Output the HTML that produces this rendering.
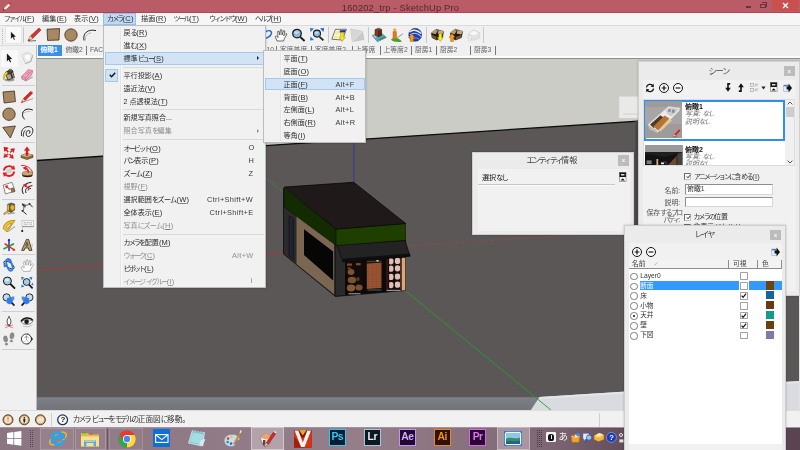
<!DOCTYPE html>
<html lang="ja">
<head>
<meta charset="utf-8">
<title>160202_trp - SketchUp Pro</title>
<style>
html,body{margin:0;padding:0;}
body{width:800px;height:450px;overflow:hidden;position:relative;background:#f0f0f0;will-change:transform;
  font-family:"Liberation Sans","Noto Sans CJK JP",sans-serif;font-size:7.1px;color:#222;line-height:1;}
.a{position:absolute;}
.t{position:absolute;white-space:nowrap;}
.k{letter-spacing:-0.27em;}
.w{letter-spacing:-0.1em;}
.e{font-size:1.06em;letter-spacing:0.2px;}
.h{letter-spacing:-0.2em;}
u{text-decoration:underline;text-underline-offset:0.5px;text-decoration-thickness:0.5px;text-decoration-color:rgba(40,40,40,.55);}
svg{position:absolute;overflow:visible;}
#title{left:0;top:0;width:800px;height:12.5px;background:#b95c67;}
#title .cap{left:341.8px;top:2.6px;font-size:9.4px;color:#55272e;letter-spacing:0.15px;}
#menubar{left:0;top:12.5px;width:800px;height:12px;background:#f6f6f7;}
#menubar .t{top:2.6px;font-size:7.1px;color:#333;letter-spacing:0.1px;}
#toolbar{left:0;top:24.5px;width:800px;height:34px;background:#f0f0f0;border-top:0.6px solid #dadada;}
.vsep{position:absolute;width:0.6px;background:#c8c8c8;top:1.6px;height:16px;}
.tab{position:absolute;top:21.2px;font-size:6.8px;color:#626262;white-space:nowrap;}
.tbar{position:absolute;top:20.2px;width:0.7px;height:9.5px;background:#777;}
#ltools{left:0;top:57.5px;width:36.5px;height:352px;background:#f0f0f0;}
#view{left:36.5px;top:58.5px;width:763.5px;height:351px;background:#5a5756;overflow:hidden;}
#status{left:0;top:409.5px;width:800px;height:17px;background:#f1f1f1;border-top:0.6px solid #dcdcdc;box-sizing:border-box;}
#task{left:0;top:426.5px;width:800px;height:23.5px;background:#7d616e;}
.menu{background:#f1f1f1;border:1px solid #bcbcbc;box-shadow:1.2px 1.2px 1.6px rgba(0,0,0,.22);box-sizing:border-box;}
.mi{position:absolute;left:0;height:13px;width:100%;}
.mi .l{position:absolute;top:2.9px;white-space:nowrap;font-size:7.1px;color:#2c2c2c;}
.mi .s{position:absolute;top:2.8px;white-space:nowrap;font-size:7.4px;color:#3a3a3a;letter-spacing:0.35px;}
.mi.g .l,.mi.g .s{color:#8e8e8e;}
.sep{position:absolute;height:0.6px;background:#dadada;}
.hl{position:absolute;background:#d1e3f5;border:1px solid #a4c9ef;box-sizing:border-box;}
.panel{position:absolute;background:#ebebeb;border:0.6px solid #cfcfcf;box-sizing:border-box;box-shadow:0 0 2px rgba(0,0,0,.25);}
.ptitle{position:absolute;white-space:nowrap;font-size:8.4px;color:#444;}
.xbtn{position:absolute;width:11px;height:10.5px;background:#bcbcbc;color:#fff;font-size:5.5px;text-align:center;line-height:10.5px;font-weight:bold;}
.ck{position:absolute;width:6.6px;height:6.6px;background:#fff;border:1px solid;border-color:#6e6e6e #c4c4c4 #c4c4c4 #6e6e6e;box-sizing:border-box;}
.rd{position:absolute;width:7.4px;height:7.4px;border-radius:50%;background:#fff;border:1px solid #7c7c7c;box-sizing:border-box;}
.sw{position:absolute;width:8.2px;height:8.2px;}
.lt{position:absolute;font-size:6.8px;color:#333;white-space:nowrap;}
.ad{top:2.8px;width:16.6px;height:16.4px;border:1.3px solid;box-sizing:border-box;font-size:10.4px;font-weight:bold;text-align:center;line-height:13.4px;letter-spacing:-0.5px;}
#task{background:linear-gradient(90deg,#8b7581 0,#947e89 45%,#7f6875 68%,#5e4856 80%,#5a4452 100%);}

</style>
</head>
<body>
<!-- TITLE -->
<div id="title" class="a">
  <div class="a" style="left:0;top:11.7px;width:800px;height:0.8px;background:#b44452"></div>
  <svg style="left:2px;top:1.5px" width="10" height="10" viewBox="0 0 10 10"><path d="M1 8.5 L2 5.5 L7 0.8 L9.2 3 L4 7.8 Z" fill="#f4ead8" stroke="#8a3a30" stroke-width="0.6"/><path d="M6.4 1.4 L8.6 3.6 L9.3 2.6 L7.3 0.6Z" fill="#d0342c"/><path d="M1 8.5 L1.6 6.6 L2.8 7.9Z" fill="#333"/></svg>
  <div class="t cap">160202_trp - SketchUp Pro</div>
  <div class="a" style="left:746px;top:6.3px;width:5.2px;height:1.5px;background:#6b343c"></div>
  <div class="a" style="left:760.4px;top:3.8px;width:5.2px;height:4.4px;border:1px solid #6b343c;box-sizing:border-box"></div>
  <div class="a" style="left:761.8px;top:2.4px;width:5.2px;height:4.4px;border:1px solid #6b343c;border-left:none;border-bottom:none;box-sizing:border-box"></div>
  <div class="a" style="left:772px;top:0;width:26.2px;height:10.6px;background:#ca4f4f"></div>
  <svg style="left:782px;top:2px" width="7" height="7" viewBox="0 0 7 7"><path d="M1 1 L6 6 M6 1 L1 6" stroke="#fff" stroke-width="1.3"/></svg>
</div>
<!-- MENUBAR -->
<div id="menubar" class="a">
  <div class="t" style="left:3.7px"><span class="k">ファイル</span><span class="e">(<u>F</u>)</span></div>
  <div class="t" style="left:42px">編集<span class="e">(<u>E</u>)</span></div>
  <div class="t" style="left:74px">表示<span class="e">(<u>V</u>)</span></div>
  <div class="a" style="left:103px;top:0.4px;width:33px;height:12px;background:#bfdaf5;border:1px solid #94c0ee;box-sizing:border-box;"></div>
  <div class="t" style="left:107px"><span class="k">カメラ</span><span class="e">(<u>C</u>)</span></div>
  <div class="t" style="left:141px">描画<span class="e">(<u>R</u>)</span></div>
  <div class="t" style="left:173.5px"><span class="k">ツール</span><span class="e">(<u>T</u>)</span></div>
  <div class="t" style="left:209px"><span class="k">ウィンドウ</span><span class="e">(<u>W</u>)</span></div>
  <div class="t" style="left:255px"><span class="k">ヘルプ</span><span class="e">(<u>H</u>)</span></div>
</div>
<!-- TOOLBAR -->
<div id="toolbar" class="a">
  <div class="a" style="left:2px;top:3px;width:1px;height:17px;background:repeating-linear-gradient(#b8b8b8 0 1px,transparent 1px 2px)"></div>
  <!-- select arrow -->
  <div class="a" style="left:5px;top:0.8px;width:16.6px;height:17.4px;background:#f9f9f9;border:1px solid #e6e6e6;box-sizing:border-box"></div>
  <svg style="left:9.6px;top:5px" width="6.6" height="10" viewBox="0 0 8 12"><path d="M1 0.5 L1 9.5 L3.2 7.6 L4.8 11 L6.2 10.4 L4.7 7.1 L7.3 6.9 Z" fill="#111" stroke="#fff" stroke-width="0.4"/></svg>
  <div class="vsep" style="left:22.5px"></div>
  <!-- pencil -->
  <svg style="left:27px;top:1.7px" width="15" height="15" viewBox="0 0 15 15"><path d="M1 14 L3.4 9 L12 1 L14 3 L5.6 11.6 Z" fill="#d8322c" stroke="#7a1612" stroke-width="0.5"/><path d="M1 14 L3.4 9 L5.6 11.6Z" fill="#e9cfa0"/><path d="M1 14 L2 12 L3 13.2Z" fill="#222"/><path d="M1.5 14.2 L9 13.6" stroke="#333" stroke-width="0.7"/></svg>
  <!-- rectangle -->
  <svg style="left:45.5px;top:2.7px" width="15" height="13" viewBox="0 0 15 13"><path d="M1 1.2 L13.6 0.6 L13 12 L1.6 12.4 Z" fill="#a88862" stroke="#3a2c1a" stroke-width="0.8"/></svg>
  <!-- circle -->
  <svg style="left:63.5px;top:2.2px" width="14" height="14" viewBox="0 0 14 14"><circle cx="7" cy="7" r="6.2" fill="#a88862" stroke="#3a2c1a" stroke-width="0.8"/></svg>
  <!-- arc -->
  <svg style="left:82px;top:2.2px" width="16" height="14" viewBox="0 0 16 14"><path d="M2 12.5 C0.5 5 6 0.8 14 2.6" fill="none" stroke="#222" stroke-width="1"/><path d="M3.5 12.5 C3 8 5.5 5.4 9 5" fill="none" stroke="#888" stroke-width="0.6"/></svg>
  <!-- orbit (mostly hidden) -->
  <svg style="left:262px;top:2.7px" width="12" height="13" viewBox="0 0 12 13"><ellipse cx="5" cy="6.5" rx="5" ry="3" fill="none" stroke="#2a66c8" stroke-width="1.6" transform="rotate(-35 5 6.5)"/></svg>
  <!-- pan hand -->
  <svg style="left:274px;top:2.2px" width="14" height="14" viewBox="0 0 14 14"><path d="M3 13 L1.2 8.6 L2.4 7.8 L4 9.6 L3.6 3.6 L5 3.4 L5.8 7 L6.4 1.8 L7.8 1.8 L8 7 L9.6 2.6 L10.8 3 L9.8 7.8 L12 5.4 L13 6.2 L10.4 10.6 L9.6 13 Z" fill="#fbfbfb" stroke="#333" stroke-width="0.7"/></svg>
  <!-- zoom -->
  <svg style="left:291px;top:2.2px" width="15" height="14" viewBox="0 0 15 14"><circle cx="6" cy="5.6" r="4.3" fill="#8fb9dc" stroke="#1c1c1c" stroke-width="1.3"/><path d="M9 8.8 L13.6 13" stroke="#222" stroke-width="2"/><ellipse cx="5.4" cy="4.6" rx="2.4" ry="1.4" fill="#c4dcf0"/></svg>
  <!-- zoom extents -->
  <svg style="left:309px;top:1.7px" width="16" height="15" viewBox="0 0 16 15"><circle cx="8" cy="6.6" r="3.5" fill="#8fb9dc" stroke="#1c1c1c" stroke-width="1.1"/><ellipse cx="7.6" cy="5.8" rx="1.9" ry="1.1" fill="#c4dcf0"/><path d="M10.6 9.8 L14.4 13.4" stroke="#222" stroke-width="1.8"/><g fill="#2f74d0"><path d="M1 1 L5 1.6 L1.6 5Z"/><path d="M15 1 L11 1.6 L14.4 5Z"/><path d="M1 13.6 L5 13 L1.6 9.6Z"/><path d="M12 1 L15 1 L15 4Z"/></g></svg>
  <div class="vsep" style="left:328px"></div>
  <!-- location / terrain / building / person icons (page coords) -->
  <svg style="left:0;top:-25.1px" width="800" height="60" viewBox="0 0 800 60">
    <g>
      <path d="M335.4 29.4 L346.4 29.2 L342.4 40 L331.8 39.2Z" fill="#fbf8e4" stroke="#3a3a3a" stroke-width="0.7"/>
      <path d="M336 31 L339.6 30.6 L338.6 34.4 L334.6 34.8Z" fill="#f6ec8c"/><path d="M334 36 L338 35.6 L337.4 38.4 L333.2 38.4Z" fill="#f6ec8c"/>
      <path d="M340 30.2 L345.6 30 L345 32.4 L339.4 32.6Z" fill="#1c3a9c"/>
      <path d="M340.6 32.6 L343.8 32.6 L343.8 37.2 L345.4 37.2 L342.2 41.4 L339 37.2 L340.6 37.2Z" fill="#f4e41c" stroke="#8a7c00" stroke-width="0.4"/>
    </g>
    <g>
      <path d="M350.6 28.8 L362.4 31.4 L364 39.6 L352.4 41.6Z" fill="#c9c9c9" stroke="#b4b4b4" stroke-width="0.5"/>
      <path d="M350.6 28.8 L362.4 31.4 L352.4 41.6Z" fill="#d6d6d6"/>
      <path d="M352.4 41.6 L362.4 31.4" stroke="#e6e6e6" stroke-width="0.8"/>
    </g>
    <g>
      <path d="M372.2 35.4 L380.6 32.4 L386.4 37.4 L377.4 41.8Z" fill="#4aa4e4" stroke="#2a4a6a" stroke-width="0.4"/>
      <path d="M373.6 35.6 L377 34.4 L379 36.4 L375.4 37.8Z" fill="#f2e27a"/>
      <path d="M378.4 39 L384.6 36.2 L386 37.4 L379.4 40.6Z" fill="#3a9a3c"/>
      <path d="M375 29.6 L378.6 28.2 L381.6 29.4 L381.6 35.4 L378 37 L375 35.4Z" fill="#7c3c26" stroke="#3a1a10" stroke-width="0.5"/>
      <path d="M378 31 L381.6 29.4 L381.6 35.4 L378 37Z" fill="#58281a"/>
    </g>
    <g>
      <path d="M391 39.4 C394 37 399 38 402 41.4 C398 42.4 393 42 391 39.4Z" fill="#3aa82c"/>
      <path d="M396.6 38.4 L403 33.6" stroke="#8e8e8e" stroke-width="0.9"/>
      <circle cx="394.7" cy="29.7" r="1.5" fill="#f0a030"/>
      <path d="M393 31.6 L396.4 31.6 L396.6 38.6 L394.8 39.8 L393 38.6Z" fill="#e87c14" stroke="#9a4c08" stroke-width="0.4"/>
    </g>
  </svg>
  <div class="vsep" style="left:367.5px"></div>
  <div class="vsep" style="left:425.5px"></div>
  <!-- globe / warehouse icons (page coords) -->
  <svg style="left:0;top:-25.1px" width="800" height="60" viewBox="0 0 800 60">
    <g>
      <circle cx="415.2" cy="34.8" r="6.5" fill="#1f3fa4" stroke="#16286a" stroke-width="0.5"/>
      <path d="M409.6 32 C412 29.4 417 29.4 421 33.6" stroke="#e8eefa" stroke-width="1.5" fill="none"/>
      <path d="M410 35 C413.4 32.2 417.4 33 421.4 36.6" stroke="#b8c8ee" stroke-width="1.1" fill="none"/>
      <path d="M413 38.6 C415.4 37.4 418 38 419.6 39.6" stroke="#8aa4e0" stroke-width="0.9" fill="none"/>
      <path d="M410.2 41.4 L410.2 37.6 L408.6 37.6 L411.8 33.8 L415 37.6 L413.4 37.6 L413.4 41.4Z" fill="#f79a1c" stroke="#9a5400" stroke-width="0.4"/>
    </g>
    <g>
      <path d="M431.4 33 L436.4 29.4 L443.6 31.4 L442.4 37.6 L436.6 40 L432 37.6Z" fill="#1e1812" stroke="#120e08" stroke-width="0.5"/>
      <path d="M431.4 33 L434.4 29.6 L438 30.6 L435.6 34.2Z" fill="#b49a6e"/><path d="M438.6 30.2 L443.8 31.2 L442.2 34.4 L437.6 33.4Z" fill="#c4aa7c"/>
      <path d="M432 35 L436.4 36.6 L436.6 40 L432 37.6Z" fill="#6a5434"/>
      <path d="M438.8 33.6 L441.8 33.6 L441.8 37.4 L443.4 37.4 L440.3 41.4 L437.2 37.4 L438.8 37.4Z" fill="#f8ec1c" stroke="#8a7c00" stroke-width="0.4"/>
    </g>
    <g>
      <path d="M450.4 33 L455.4 29.4 L462.6 31.4 L461.4 37.6 L455.6 40 L451 37.6Z" fill="#1e1812" stroke="#120e08" stroke-width="0.5"/>
      <path d="M450.4 33 L453.4 29.6 L457 30.6 L454.6 34.2Z" fill="#b49a6e"/><path d="M457.6 30.2 L462.8 31.2 L461.2 34.4 L456.6 33.4Z" fill="#c4aa7c"/>
      <path d="M456 36.8 L461.4 35 L461.4 37.6 L455.8 40Z" fill="#6a5434"/>
      <path d="M450.6 41.4 L450.6 37.4 L449 37.4 L452.1 33.4 L455.2 37.4 L453.6 37.4 L453.6 41.4Z" fill="#f79a1c" stroke="#9a5400" stroke-width="0.4"/>
    </g>
    <g>
      <path d="M468 34.4 L473.4 29.6 L480 33 L479.4 38 L473.6 40.4 L468.6 38.4Z" fill="#e2e2e2" stroke="#c6c6c6" stroke-width="0.5"/>
      <path d="M469.6 33.8 L473.6 30.8 L478.6 33.2 L474 35.4Z" fill="#f8f8f8"/>
      <path d="M468.6 41 L468.6 38 L467.4 38 L469.8 35 L472.2 38 L471 38 L471 41Z" fill="#f0f0f0" stroke="#c4c4c4" stroke-width="0.4"/>
    </g>
  </svg>
  <div class="vsep" style="left:482.5px"></div>
  <!-- scene tabs -->
  <div class="a" style="left:37.5px;top:19.5px;width:24.5px;height:10.6px;background:#3d8ee8"></div>
  <div class="tab" style="left:40.5px;color:#fff;font-weight:bold">俯瞰1</div>
  <div class="tab" style="left:65.5px">俯瞰2</div><div class="tbar" style="left:86px"></div>
  <div class="tab" style="left:90px">FAC</div>
  <div class="tab" style="left:266.5px">10</div><div class="tbar" style="left:276px"></div>
  <div class="tab" style="left:280px">客席普席</div><div class="tbar" style="left:311px"></div>
  <div class="tab" style="left:315px">客席普席2</div><div class="tbar" style="left:351.5px"></div>
  <div class="tab" style="left:355px">上等席</div><div class="tbar" style="left:379.5px"></div>
  <div class="tab" style="left:383.5px">上等席2</div><div class="tbar" style="left:410.5px"></div>
  <div class="tab" style="left:415px">厨房1</div><div class="tbar" style="left:436px"></div>
  <div class="tab" style="left:440px">厨房2</div><div class="tbar" style="left:470px"></div>
  <div class="tab" style="left:474px">厨房3</div><div class="tbar" style="left:495px"></div>
  <div class="a" style="left:36.5px;top:30.8px;width:764px;height:1.4px;background:#fbfbfb"></div>
  <div class="a" style="left:36.5px;top:32.2px;width:764px;height:1.2px;background:#8e8e8e"></div>
</div>

<div id="view" class="a">
<svg class="a" style="left:0;top:0" width="764" height="351" viewBox="36.5 58.5 764 351">
  <defs>
    <linearGradient id="band" x1="0" y1="0" x2="0" y2="1"><stop offset="0" stop-color="#7d8086"/><stop offset="1" stop-color="#717479"/></linearGradient>
    <pattern id="brick" width="4" height="2.4" patternUnits="userSpaceOnUse"><rect width="4" height="2.4" fill="#9a5432"/><rect width="4" height="0.4" fill="#7c4128"/><rect x="1" width="0.4" height="1.2" fill="#7c4128"/><rect x="3" y="1.2" width="0.4" height="1.2" fill="#7c4128"/><rect x="1.6" y="0.5" width="1.2" height="0.7" fill="#a86038"/></pattern>
  </defs>
  <!-- sky -->
  <polygon points="36,57 800,57 800,110.1 36.5,160" fill="#cbccc6"/>
  <line x1="36.5" y1="160" x2="800" y2="110.1" stroke="#0c0c0c" stroke-width="1.3"/>
  <!-- white block at horizon right -->
  <rect x="618.7" y="96" width="19" height="21.6" fill="#e9e9e7"/>
  <rect x="622.5" y="113.2" width="15.2" height="0.7" fill="#c9c9c7"/>
  <!-- dark strip right edge -->
  <rect x="634.6" y="120.4" width="3" height="110" fill="#494747"/>
  <!-- bottom band -->
  <rect x="36" y="396.7" width="764" height="13" fill="url(#band)"/>
  <polygon points="530,410 539,396.6 626,391 800,380.5 800,410" fill="#d9dbe1"/>
  <polygon points="539,396.6 626,391 800,380.5 800,382.5 626,393 539,398.4" fill="#e4e6ea"/>
  <!-- axes -->
  <line x1="36.5" y1="269.6" x2="283" y2="253" stroke="#b83434" stroke-width="0.8"/>
  <line x1="405.5" y1="245.7" x2="640" y2="230" stroke="#c04040" stroke-width="0.8" stroke-dasharray="0.9 1.3"/>
  <line x1="404.5" y1="290" x2="551" y2="410" stroke="#23a02a" stroke-width="0.9"/>
  <line x1="225" y1="145" x2="283.5" y2="192.5" stroke="#3cae48" stroke-width="0.8" stroke-dasharray="1 1.6"/>
  <line x1="353.4" y1="60" x2="353.4" y2="182" stroke="#2626c4" stroke-width="0.7"/>
  <!-- BUILDING -->
  <g stroke-linejoin="round">
  <!-- left wall base -->
  <polygon points="283,188 335,229 335,296 283,253.5" fill="#2b2b2b" stroke="#0c0c0c" stroke-width="0.8"/>
  <!-- tan frame on left wall -->
  <polygon points="296,212.5 333.5,241 333.5,293.7 296,263.4" fill="#7b6651"/>
  <polygon points="303.5,228.8 332.6,251 332.6,280 303.5,254.6" fill="#060606"/>
    <!-- door stripe on left pillar -->
  <polygon points="288.5,215 293,218.5 293,259 288.5,255.5" fill="#23232f" stroke="#0a0a0a" stroke-width="0.5"/>
  <!-- front facade -->
  <polygon points="335,244 405,239.5 405,290 335,296" fill="#0b0b0b" stroke="#0c0c0c" stroke-width="0.7"/>
  <!-- front left pillar -->
  <polygon points="335,244 344.5,243.4 344.5,294.6 335,295.5" fill="#2a2a2a"/>
  <!-- left window with brown shapes -->
  <polygon points="346,262 363,261 363,292 346,293.2" fill="#120c08"/>
  <ellipse cx="350.5" cy="271.5" rx="3.4" ry="3" fill="#7c5332"/>
  <ellipse cx="351.5" cy="279.5" rx="4.2" ry="3.2" fill="#7c5332"/>
  <ellipse cx="350.5" cy="287.5" rx="4.2" ry="3.4" fill="#835a38"/>
  <ellipse cx="358.5" cy="287" rx="3.6" ry="3" fill="#7a5030"/>
  <ellipse cx="357.5" cy="278.5" rx="1.6" ry="2" fill="#5c3a22"/>
  <rect x="346.5" y="263" width="5" height="2.2" fill="#8d4526"/>
  <rect x="355.5" y="262.6" width="4.6" height="2.2" fill="#8d4526"/>
  <rect x="347" y="267" width="3.4" height="1.6" fill="#7a3c22"/>
  <!-- door brick -->
  <polygon points="366.3,263 381,262.2 381,287.4 366.3,288.4" fill="url(#brick)"/>
  <rect x="366.3" y="260.2" width="14.7" height="1.6" fill="#5a3424"/>
  <rect x="376" y="259.4" width="2" height="1.6" fill="#d8d8d8"/>
  <rect x="367" y="288.8" width="14" height="1.4" fill="#3d464a"/>
  <!-- right window with pink circles -->
  <polygon points="386,258.5 400.5,257.6 400.5,288.6 386,289.6" fill="#1a0d0a"/>
  <g fill="#dcc0b9">
    <ellipse cx="390.4" cy="260.8" rx="2.9" ry="3.1"/><ellipse cx="397" cy="260.4" rx="2.9" ry="3.1"/>
    <ellipse cx="390.4" cy="268.2" rx="2.9" ry="3.1"/><ellipse cx="397" cy="267.8" rx="2.9" ry="3.1"/>
    <ellipse cx="390.4" cy="276.4" rx="2.9" ry="3.1"/><ellipse cx="397" cy="276.0" rx="2.9" ry="3.1"/>
    <ellipse cx="390.4" cy="284.6" rx="2.9" ry="3.1"/><ellipse cx="397" cy="284.2" rx="2.9" ry="3.1"/>
  </g>
  <rect x="386.2" y="258.4" width="1" height="30.6" fill="#6a2418"/><rect x="387.2" y="258.4" width="1.4" height="30.6" fill="#140a08"/>
  <rect x="399.6" y="258" width="0.9" height="30.6" fill="#6a2418"/>
  <rect x="393.2" y="258" width="1" height="31" fill="#140a08"/>
  <rect x="386" y="289.3" width="14" height="1.3" fill="#8f8f8f"/>
  <rect x="348" y="292.6" width="12" height="1.2" fill="#8a8a8a"/>
  <!-- tan pillar right -->
  <polygon points="401,257.3 405,257 405,290 401,290.3" fill="#d4a97c" stroke="#1a1208" stroke-width="0.4"/>
  <!-- awning -->
  <polygon points="336.5,244.6 404.5,240 409.6,255.8 342.3,261.3" fill="#232323" stroke="#080808" stroke-width="0.7"/>
  <polygon points="342.3,258.3 409.6,253 409.6,255.8 342.3,261.3" fill="#0e0e0e"/>
  <!-- green bands -->
  <polygon points="283.6,187.5 335.6,228.6 335.6,245 283.6,206.6" fill="#132b02" stroke="#0a1400" stroke-width="0.6"/>
  <polygon points="335.6,228.6 405,223 405,239.8 335.6,245" fill="#1f3f00" stroke="#0a1400" stroke-width="0.6"/>
  <!-- roof -->
  <polygon points="283.6,186.6 353.2,181.8 405.2,223 335.6,228.6" fill="#1f1a19" stroke="#070707" stroke-width="0.8"/>
  </g>
</svg>
</div>
<!-- LEFT TOOLS -->
<div class="a" style="left:0;top:45px;width:36px;height:365px;background:#f0f0f0;border-top:0.6px solid #dcdcdc"></div>
<div class="a" style="left:35.6px;top:45px;width:1.9px;height:364.5px;background:linear-gradient(90deg,#dadada,#9c9c9c)"></div>
<div class="a" style="left:1.2px;top:49.5px;width:17px;height:17px;background:#f9f9f9;box-sizing:border-box"></div>
<svg style="left:2.2px;top:50.5px" width="14" height="14" viewBox="0 0 14 14"><path d="M5 2.6 L5 10.2 L6.8 8.7 L8 11.5 L9.1 11 L7.9 8.3 L10.2 8.1 Z" fill="#1a1a1a"/><path d="M4.3 3.2 L4.3 10.8" stroke="#c4c4c4" stroke-width="0.7"/></svg>
<svg style="left:20.2px;top:50.5px" width="14" height="14" viewBox="0 0 14 14"><path d="M2 4 L8 1.4 L12.6 4.4 L11 10.4 L5.4 12.6 Z" fill="#f4f4f4" stroke="#c0c0c0" stroke-width="0.7"/><path d="M4.4 4.6 L8.2 3 L11 5 L9.8 8.8 L6 10.2 Z" fill="#fff" stroke="#d0d0d0" stroke-width="0.5"/><path d="M5.4 12.6 L11 10.4 L12.6 4.4" fill="none" stroke="#a8a8a8" stroke-width="0.9"/></svg>
<svg style="left:2.2px;top:68.0px" width="14" height="14" viewBox="0 0 14 14"><ellipse cx="7.4" cy="12" rx="5" ry="1.4" fill="#9a9a9a"/><path d="M3.4 5.4 L10.6 3.4 L12.4 9.6 L6 12 Z" fill="#b8a47a" stroke="#2a2a2a" stroke-width="0.8"/><ellipse cx="7" cy="4.4" rx="3.8" ry="1.6" transform="rotate(-15 7 4.4)" fill="#4a463a" stroke="#1a1a1a" stroke-width="0.6"/><path d="M6 3 C7 0.6 10.4 0.8 11 3.6" fill="none" stroke="#222" stroke-width="0.8"/><path d="M4.6 3.6 C2.6 4.6 1 7.4 1.4 10.4 C1.4 12 2.4 12 2.4 10.6 C2.6 8.4 4 6.4 6 5.4 Z" fill="#f2d21c" stroke="#8a7400" stroke-width="0.4"/><path d="M9 5.6 L10.4 10" stroke="#2a2a44" stroke-width="1.6"/></svg>
<svg style="left:20.2px;top:68.0px" width="14" height="14" viewBox="0 0 14 14"><path d="M4 12.4 L12 8.2 L13 9.4 L6 13.4 Z" fill="#b0b0b0"/><path d="M1.6 8.6 L8.4 1.6 L12.6 2.6 L12 6.4 L5.4 12.4 L1.8 11 Z" fill="#f4a0b8" stroke="#b45c78" stroke-width="0.6"/><path d="M1.6 8.6 L5.6 9.6 L5.4 12.4 M5.6 9.6 L12.6 2.6" fill="none" stroke="#c06a86" stroke-width="0.6"/><path d="M6 6 L9 3.4 L10 3.8 L7 6.6Z" fill="#d87c98"/></svg>
<svg style="left:2.2px;top:89.5px" width="14" height="14" viewBox="0 0 14 14"><path d="M1 2 L12.4 1 L13.4 11.6 L2.2 13 Z" fill="#a88862" stroke="#3a2c1a" stroke-width="0.8"/></svg>
<svg style="left:20.2px;top:89.5px" width="14" height="14" viewBox="0 0 14 14"><path d="M1.6 12.6 L13 8.6" stroke="#8a7a70" stroke-width="0.7"/><path d="M1.4 12.6 L3.2 8.8 L10.8 1.2 L12.8 3 L5 10.8 Z" fill="#ea1c1c" stroke="#8a1010" stroke-width="0.4"/><path d="M10.8 1.2 L12.8 3 L13.4 2.2 L11.6 0.4Z" fill="#f4a8b8"/><path d="M1.4 12.6 L3.2 8.8 L5 10.8Z" fill="#ead8a8"/><path d="M1.4 12.6 L2.2 10.9 L3 11.9Z" fill="#1a1a1a"/></svg>
<svg style="left:2.2px;top:107.0px" width="14" height="14" viewBox="0 0 14 14"><circle cx="7" cy="7.2" r="6.2" fill="#a88862" stroke="#3a2c1a" stroke-width="0.8"/></svg>
<svg style="left:20.2px;top:107.0px" width="14" height="14" viewBox="0 0 14 14"><path d="M4.6 12.4 C-0.6 7 4 -0.6 12.8 3" fill="none" stroke="#1a1a1a" stroke-width="1"/><path d="M2.6 8 C3 5.6 6 4.2 10.6 4.6" fill="none" stroke="#9a9a9a" stroke-width="0.6"/></svg>
<svg style="left:2.2px;top:124.5px" width="14" height="14" viewBox="0 0 14 14"><path d="M0.8 2.4 L13.4 1 L8.4 13 Z" fill="#a88862" stroke="#3a2c1a" stroke-width="0.8"/></svg>
<svg style="left:20.2px;top:124.5px" width="14" height="14" viewBox="0 0 14 14"><path d="M1.6 11 C0.6 6 3 2 8 1.6 C12 1.4 13.6 4 12.6 7.4 C11.6 11 8 12.6 6.6 10.6 C5.4 8.6 6.4 5.6 8.6 5.4 C10.6 5.4 10.4 8.4 8.8 8.6 M3.4 11.6 C3 8.6 4 6 5.6 5" fill="none" stroke="#1a1a1a" stroke-width="0.9"/></svg>
<svg style="left:2.2px;top:145.5px" width="14" height="14" viewBox="0 0 14 14"><g fill="#e81c1c" stroke="#8a0c0c" stroke-width="0.3"><path d="M7 7 L2 1.4 L5.8 2 L4.6 3.2 Z M2 1.4 L2.6 5.2 L3.8 4Z"/><path d="M2.2 1.2 L6.4 2 L2.8 5.4Z"/><path d="M12.6 2.4 L11.6 6.6 L8.4 3Z"/><path d="M1.6 11.4 L2.8 7.4 L5.8 10.8Z"/><path d="M11.4 12.6 L7.4 11.6 L10.8 8.6Z"/></g><path d="M3.6 3.2 L10 11 M11 4 L3.6 10" stroke="#e81c1c" stroke-width="1.3"/><circle cx="7" cy="7" r="1.2" fill="#f4f4f4"/></svg>
<svg style="left:20.2px;top:145.5px" width="14" height="14" viewBox="0 0 14 14"><path d="M1 9.4 L6.6 7.4 L13 9 L13 11.4 L7 13.6 L1 11.6 Z" fill="#8a6a3a" stroke="#3a2a10" stroke-width="0.5"/><path d="M1 9.4 L6.6 7.4 L13 9 L7 11 Z" fill="#d4b482"/><path d="M6 9.6 L6 4.6 L4.2 4.6 L7 0.8 L9.8 4.6 L8 4.6 L8 9.6 Z" fill="#e81c1c" stroke="#8a0c0c" stroke-width="0.3"/></svg>
<svg style="left:2.2px;top:163.5px" width="14" height="14" viewBox="0 0 14 14"><path d="M2 6.6 C2 2.6 7 0.8 10.6 3.4" fill="none" stroke="#e81c1c" stroke-width="1.9"/><path d="M8.6 5.6 L13.2 5.6 L12 1.2 Z" fill="#e81c1c"/><path d="M12 7.6 C12 11.6 7 13.4 3.4 10.8" fill="none" stroke="#e81c1c" stroke-width="1.9"/><path d="M5.4 8.6 L0.8 8.6 L2 13 Z" fill="#e81c1c"/><circle cx="7" cy="7" r="2.6" fill="#c8d4d8"/></svg>
<svg style="left:20.2px;top:163.5px" width="14" height="14" viewBox="0 0 14 14"><ellipse cx="7.4" cy="11" rx="5.2" ry="2.2" fill="#2a1c10"/><ellipse cx="7.4" cy="9.6" rx="5.2" ry="2.2" fill="#c8a878" stroke="#3a2a10" stroke-width="0.4"/><path d="M1 1.4 C6.6 1 12 4.6 12.6 9" fill="none" stroke="#c82020" stroke-width="0.9"/><path d="M8.4 8.8 C8.4 6.4 7 4.6 5 3.8" fill="none" stroke="#e81c1c" stroke-width="1.6"/><path d="M2.6 3.8 L6.8 2 L6 6.4 Z" fill="#e81c1c"/></svg>
<svg style="left:2.2px;top:181.0px" width="14" height="14" viewBox="0 0 14 14"><path d="M1.2 4 L10 1.4 L13 10 L3.4 13 Z" fill="#fff" stroke="#5a5a5a" stroke-width="0.7"/><path d="M8.6 7.6 L11.4 6.8 L13 10.6 L9.8 11.4Z" fill="#9a7648" stroke="#3a2a10" stroke-width="0.4"/><path d="M2.6 4.8 L6.4 4.2 L4.4 7.4Z" fill="#e81c1c"/><path d="M4.4 5.4 L8 8.6" stroke="#e81c1c" stroke-width="1.2"/></svg>
<svg style="left:20.2px;top:181.0px" width="14" height="14" viewBox="0 0 14 14"><path d="M3.4 13 C0.4 8 3 2 11.4 1.4" fill="none" stroke="#1a1a1a" stroke-width="1"/><path d="M6 12 C4.6 8.6 6.4 5.6 12.4 4.6" fill="none" stroke="#1a1a1a" stroke-width="1"/><path d="M8 9.6 C8 8.6 9 7.6 11 7.4" fill="none" stroke="#1a1a1a" stroke-width="0.9"/><path d="M3 3.4 L7.4 2.8 L5.4 6.4Z" fill="#e81c1c"/><path d="M5.4 4.4 L8.6 7.4" stroke="#e81c1c" stroke-width="1.2"/><path d="M6.6 6 L9.6 6 L8.4 8.6Z" fill="#e81c1c"/></svg>
<svg style="left:2.2px;top:201.5px" width="14" height="14" viewBox="0 0 14 14"><path d="M5 11 L12 10 L13.4 11.4 L6 12.6Z" fill="#a8a8a8"/><path d="M5.4 2.4 L9 1 L12.6 2 L12.6 8 L9 10.4 L5.4 8.6 Z" fill="#5a5e66" stroke="#2a2c30" stroke-width="0.5"/><ellipse cx="10.4" cy="5.6" rx="2.2" ry="2.8" fill="#f2b41c" stroke="#6a4c00" stroke-width="0.4"/><path d="M5.4 2.6 L7 3.2 L7 8.6 L5.4 8 Z" fill="#f2b41c"/><path d="M6 8.4 L1.6 11.4 L2.2 12.8 L7 9.6 Z" fill="#f2b41c" stroke="#6a4c00" stroke-width="0.4"/></svg>
<svg style="left:20.2px;top:201.5px" width="14" height="14" viewBox="0 0 14 14"><path d="M2.6 2.2 L5.6 5 M9.4 1.6 L12.6 5.2 M2 8.6 L6.6 12.4" stroke="#1a1a1a" stroke-width="0.9"/><path d="M3 3.6 L9.6 2.6 M3.4 9 L4 4.4" stroke="#1a1a1a" stroke-width="0.6"/><path d="M1.8 1.6 L4 2 L2.4 3.6Z M8.6 1 L10.8 1.4 L9.2 3Z M1.4 8 L3.6 8.4 L2 10Z" fill="#1a1a1a"/><circle cx="4.2" cy="3.6" r="1.3" fill="none" stroke="#1a1a1a" stroke-width="0.5"/></svg>
<svg style="left:2.2px;top:219.0px" width="14" height="14" viewBox="0 0 14 14"><path d="M1.2 9.6 C1.6 4.6 6 1 13 1.4 L5 13 Z" fill="#f2c21c" stroke="#8a6800" stroke-width="0.6"/><path d="M4.4 8.4 C5 6 7 4.4 9.6 4.4 L5.6 10 Z" fill="#d8d8d8" stroke="#8a6800" stroke-width="0.4"/><path d="M6 12.6 L13 7.4" stroke="#b0b0b0" stroke-width="1.2"/></svg>
<svg style="left:20.2px;top:219.0px" width="14" height="14" viewBox="0 0 14 14"><rect x="2" y="1.6" width="11.6" height="5.6" fill="#f8f8f8" stroke="#b4b4b4" stroke-width="0.6"/><path d="M3.6 3.4 L6 3.4 M7 3.4 L9.6 3.4 M10.4 3.4 L12 3.4 M3.6 5.2 L8 5.2 M9 5.2 L12 5.2" stroke="#9a9a9a" stroke-width="0.7"/><path d="M2 7.6 L13.6 7.6" stroke="#8a8a8a" stroke-width="0.9"/><path d="M2.6 7.6 L2.2 11.4" stroke="#c0c0c0" stroke-width="0.9"/><circle cx="2.2" cy="12" r="1.1" fill="#111"/></svg>
<svg style="left:2.2px;top:237.5px" width="14" height="14" viewBox="0 0 14 14"><path d="M7 1 L7 13" stroke="#1c2cd8" stroke-width="1.5"/><path d="M5.6 3 L7 0.4 L8.4 3Z" fill="#1c2cd8"/><path d="M1.4 11 L11.6 6" stroke="#1ca82c" stroke-width="1.4"/><path d="M2.6 5.6 L12.4 12" stroke="#e01c1c" stroke-width="1.4"/><path d="M10.4 12.4 L13.4 12.8 L12 10.2Z" fill="#e01c1c"/><path d="M9.6 5.4 L12.6 5.4 L11 7.6Z" fill="#1ca82c"/></svg>
<svg style="left:20.2px;top:237.5px" width="14" height="14" viewBox="0 0 14 14"><path d="M1.6 12.4 L6.4 1.4 L8.6 1.4 L12 12.4 L9 12.4 L8.4 10 L5 10 L4.2 12.4 Z M5.8 7.8 L7.8 7.8 L7 4.4 Z" fill="#b89c6c" stroke="#2a1c0c" stroke-width="0.7" fill-rule="evenodd"/><path d="M11 6.4 L13 5.6 L12.6 9.4Z" fill="#c8c8c8"/></svg>
<svg style="left:2.2px;top:258.0px" width="14" height="14" viewBox="0 0 14 14"><ellipse cx="7" cy="7" rx="6" ry="2.6" transform="rotate(35 7 7)" fill="none" stroke="#222" stroke-width="0.9"/><ellipse cx="7.4" cy="7" rx="2.6" ry="6" transform="rotate(-18 7 7)" fill="none" stroke="#2c7cf0" stroke-width="1.9"/><path d="M5 2.4 L9.4 1 L8.4 4.6Z" fill="#2c7cf0"/><path d="M1.4 6 L5.6 8 L2 9.4Z" fill="#2c7cf0"/></svg>
<svg style="left:20.2px;top:258.0px" width="14" height="14" viewBox="0 0 14 14"><path d="M3.4 13.4 L1 9.6 L2.2 8.6 L4.2 10 L3.6 4 L5 3.6 L6 7.4 L6.2 2 L7.8 1.8 L8.2 7.2 L9.6 2.6 L11 3 L10.2 8 L12.4 5.6 L13.4 6.6 L10.8 11 L10 13.4 Z" fill="#fdfdfd" stroke="#8a8a8a" stroke-width="0.6"/></svg>
<svg style="left:2.2px;top:275.5px" width="14" height="14" viewBox="0 0 14 14"><circle cx="5.4" cy="5" r="4" fill="#a8cce4" stroke="#1a1a1a" stroke-width="1"/><path d="M8.4 8 L13 12.6" stroke="#1a1a1a" stroke-width="1.9"/><ellipse cx="5" cy="4" rx="2.2" ry="1.2" fill="#dceef8"/></svg>
<svg style="left:20.2px;top:275.5px" width="14" height="14" viewBox="0 0 14 14"><circle cx="6.6" cy="6" r="3.4" fill="#a8cce4" stroke="#1a1a1a" stroke-width="0.9"/><path d="M9 8.6 L12.6 12.4" stroke="#1a1a1a" stroke-width="1.7"/><g fill="#2c7cf0"><path d="M1 0.8 L4.4 1.6 L1.8 4.2Z"/><path d="M12.4 0.8 L9 1.6 L11.6 4.2Z"/><path d="M1 11.6 L4.4 10.8 L1.8 8.2Z"/><path d="M12.8 6.4 L11 8.8 L13.4 9.6Z"/></g></svg>
<svg style="left:2.2px;top:293.0px" width="14" height="14" viewBox="0 0 14 14"><circle cx="4.6" cy="4.4" r="3.6" fill="#c4dcec" stroke="#1a1a1a" stroke-width="0.9"/><path d="M7.6 7.4 L12.4 12.6" stroke="#1a1a1a" stroke-width="1.7"/><path d="M5 5 L12.4 3.4 L11 8 L8 11.6 L4.6 10 Z" fill="#2c7cf0"/><circle cx="10.8" cy="5.2" r="1.6" fill="#5a8cd8"/></svg>
<svg style="left:20.2px;top:293.0px" width="14" height="14" viewBox="0 0 14 14"><circle cx="9.4" cy="4.4" r="3.6" fill="#c4dcec" stroke="#1a1a1a" stroke-width="0.9"/><path d="M6.4 7.4 L1.6 12.6" stroke="#1a1a1a" stroke-width="1.7"/><path d="M9 5 L1.6 3.4 L3 8 L6 11.6 L9.4 10 Z" fill="#2c7cf0"/><circle cx="3.2" cy="5.2" r="1.6" fill="#5a8cd8"/></svg>
<svg style="left:2.2px;top:314.5px" width="14" height="14" viewBox="0 0 14 14"><path d="M7 1 L7 2.6" stroke="#1a1a1a" stroke-width="1"/><path d="M7 2.4 C4.6 4.4 4.6 8 6.4 10 L7.6 10 C9.4 8 9.4 4.4 7 2.4 Z" fill="#fff" stroke="#1a1a1a" stroke-width="0.8"/><path d="M3 9.8 L11 12.8 M11 9.8 L3 12.8" stroke="#e86a6a" stroke-width="0.8"/><path d="M5.6 9.6 L8.4 11" stroke="#1a1a1a" stroke-width="0.7"/></svg>
<svg style="left:20.2px;top:314.5px" width="14" height="14" viewBox="0 0 14 14"><path d="M1 6.6 C3 2.6 10 1.6 13 5.4" fill="none" stroke="#111" stroke-width="1.5"/><path d="M1.4 7 C4 10.4 10 10.4 13 6.4 C10 4 4 4 1.4 7 Z" fill="#f4f4f4" stroke="#333" stroke-width="0.6"/><circle cx="6.6" cy="6.8" r="2.3" fill="#1a1a1a"/><path d="M3 10.6 C6 12.4 10 12 12.4 9.6" fill="none" stroke="#bcbcbc" stroke-width="1"/></svg>
<svg style="left:2.2px;top:332.0px" width="14" height="14" viewBox="0 0 14 14"><g fill="#8c8c8c" stroke="#6a6a6a" stroke-width="0.3"><ellipse cx="3.6" cy="7" rx="2.1" ry="3.2" transform="rotate(-8 3.6 7)"/><ellipse cx="4.4" cy="12.2" rx="1.4" ry="1.1"/><ellipse cx="10" cy="3.8" rx="2.1" ry="3.2" transform="rotate(8 10 3.8)"/><ellipse cx="9.4" cy="9" rx="1.4" ry="1.1"/></g></svg>
<svg style="left:20.2px;top:332.0px" width="14" height="14" viewBox="0 0 14 14"><path d="M7.6 1 L13 7 L7.6 13 Z" fill="#111"/><circle cx="6.4" cy="7" r="5" fill="#fdfdfd" stroke="#1a1a1a" stroke-width="0.8"/><path d="M6.4 3.4 L6.4 8 M4.4 6 L6.4 4 L8.4 6 M4.6 9.6 L5.4 8.6 M7.4 8.6 L8.2 9.6" stroke="#7a7a7a" stroke-width="0.7" fill="none"/></svg>
<div class="a" style="left:1.5px;top:85.0px;width:33px;height:0.7px;background:#cfcfcf"></div>
<div class="a" style="left:1.5px;top:142.0px;width:33px;height:0.7px;background:#cfcfcf"></div>
<div class="a" style="left:1.5px;top:198.5px;width:33px;height:0.7px;background:#cfcfcf"></div>
<div class="a" style="left:1.5px;top:254.3px;width:33px;height:0.7px;background:#cfcfcf"></div>
<div class="a" style="left:1.5px;top:310.5px;width:33px;height:0.7px;background:#cfcfcf"></div>
<div class="a" style="left:1.5px;top:348.5px;width:33px;height:0.7px;background:#cfcfcf"></div>

<!-- STATUS -->
<div id="status" class="a">
  <svg style="left:1.6px;top:3.6px" width="48" height="12" viewBox="0 0 48 12">
    <g stroke="#4a3420" stroke-width="0.9">
      <circle cx="6" cy="5.8" r="5" fill="#caa060"/><circle cx="22.3" cy="5.8" r="5" fill="#caa060"/><circle cx="38.4" cy="5.8" r="5" fill="#caa060"/>
    </g>
    <circle cx="6" cy="5.8" r="3.5" fill="#f6e6d0"/><circle cx="22.3" cy="5.8" r="3.5" fill="#f6e6d0"/><circle cx="38.4" cy="5.8" r="3.5" fill="#f6e6d0"/>
    <path d="M6 3.4 L6 8" stroke="#e88a8a" stroke-width="1"/><circle cx="6" cy="4.4" r="1.1" fill="#e89a9a"/>
    <circle cx="22.3" cy="3.8" r="0.9" fill="#222"/><path d="M21.2 5 L23.4 5 L23 8.6 L21.6 8.6 Z" fill="#222"/>
    <path d="M40 4.6 A2.2 2.2 0 1 0 40 7" fill="none" stroke="#d8d0c4" stroke-width="0.9"/>
  </svg>
  <div class="a" style="left:50.8px;top:2.5px;width:0.6px;height:13px;background:#cfcfcf"></div>
  <svg style="left:57px;top:3.6px" width="12" height="12" viewBox="0 0 12 12"><circle cx="5.6" cy="5.8" r="4.9" fill="#fff" stroke="#1c2f62" stroke-width="1.3"/></svg>
  <div class="t" style="left:60.6px;top:5px;font-size:8px;font-weight:bold;color:#111">?</div>
  <div class="t" style="left:72.8px;top:5px;font-size:7.7px;color:#333"><span class="k">カメラ</span> <span class="k">ビュー</span><span class="h">を</span><span class="k">モデル</span><span class="h">の</span>正面図<span class="h">に</span>移動。</div>
  <div class="a" style="left:598.5px;top:2px;width:0.6px;height:14px;background:#cfcfcf"></div>
</div>

<!-- TASKBAR -->
<div id="task" class="a">
  <div class="a" style="left:0;top:0;width:800px;height:0.8px;background:#a3929b"></div>
  <!-- start -->
  <svg style="left:7px;top:4.6px" width="15" height="15" viewBox="0 0 15 15"><g fill="#fff"><path d="M0 2 L6.4 1.1 L6.4 7 L0 7Z"/><path d="M7.2 1 L14.4 0 L14.4 7 L7.2 7Z"/><path d="M0 7.8 L6.4 7.8 L6.4 13.7 L0 12.8Z"/><path d="M7.2 7.8 L14.4 7.8 L14.4 14.8 L7.2 13.8Z"/></g></svg>
  <div class="a" style="left:30px;top:3.5px;width:4px;height:17px;background:radial-gradient(circle at 0.5px 0.5px,#5c4552 0.45px,transparent 0.6px) 0 0/2px 2px"></div>
  <!-- IE -->
  <div class="a" style="left:40px;top:1px;width:33.5px;height:22.5px;background:#96808b;border:0.6px solid #a896a0;box-sizing:border-box"></div>
  <svg style="left:47.5px;top:2.5px" width="20" height="19" viewBox="0 0 20 19"><ellipse cx="10" cy="9.5" rx="9.4" ry="4.4" transform="rotate(-32 10 9.5)" fill="none" stroke="#f2b824" stroke-width="1.5"/><path d="M15.4 11.2 A5.8 5.8 0 1 1 15.6 8.6 L6 8.6" fill="none" stroke="#2aa4ea" stroke-width="3"/></svg>
  <!-- Explorer -->
  <div class="a" style="left:75px;top:1px;width:31px;height:22.5px;background:#96808b;border:0.6px solid #a896a0;box-sizing:border-box"></div>
  <svg style="left:80px;top:4px" width="20" height="17" viewBox="0 0 20 17"><path d="M1 2 L7.6 2 L9 3.6 L19 3.6 L19 15 L1 15Z" fill="#e8b840"/><path d="M2 1 L6.6 1 L6.6 2.4 L2 2.4Z" fill="#3cae48"/><path d="M10 2.2 L12 2.2 L12 3.4 L10 3.4Z" fill="#d84c3c"/><path d="M1 5.4 L19 5.4 L19 15.6 L1 15.6Z" fill="#f8e08c"/><path d="M4 9.6 L16 9.6 L16 15.6 L13.6 15.6 L13.6 12 L6.4 12 L6.4 15.6 L4 15.6Z" fill="#5aa8e0"/><path d="M5 10.4 L15 10.4" stroke="#c8e4f8" stroke-width="0.8"/></svg>
  <div class="a" style="left:107.3px;top:2px;width:0.6px;height:20px;background:#65505b"></div>
  <!-- Chrome -->
  <div class="a" style="left:109px;top:1px;width:34px;height:22.5px;background:#927c87;border:0.6px solid #a08e98;box-sizing:border-box"></div>
  <svg style="left:117.5px;top:3.4px" width="18" height="18" viewBox="0 0 18 18"><circle cx="9" cy="9" r="8.6" fill="#e33b2e"/><path d="M9 9 L1.55 4.7 A8.6 8.6 0 0 0 9 17.6 L12.6 11.1 Z" fill="#2da94f"/><path d="M9 9 L9 17.6 A8.6 8.6 0 0 0 16.45 4.7 L9 4.7 Z" fill="#fdd93c"/><path d="M9 4.9 L16.5 4.9 A8.6 8.6 0 0 0 1.55 4.7 L5.4 11.1Z" fill="#e33b2e"/><circle cx="9" cy="9" r="4" fill="#fff"/><circle cx="9" cy="9" r="3.2" fill="#4688f1"/></svg>
  <!-- Mail -->
  <div class="a" style="left:153px;top:2.8px;width:17.4px;height:17.4px;background:#0f6fd6"></div>
  <svg style="left:155px;top:7px" width="14" height="9" viewBox="0 0 14 9"><rect x="0.6" y="0.6" width="12.4" height="7.8" fill="none" stroke="#fff" stroke-width="1.1"/><path d="M0.8 0.8 L6.8 5.6 L12.8 0.8" fill="none" stroke="#fff" stroke-width="1.1"/></svg>
  <!-- Notepad -->
  <svg style="left:187px;top:2.6px" width="20" height="19" viewBox="0 0 20 19"><path d="M5.4 1.6 L17.4 3.6 L15.6 17 L1.6 14Z" fill="#7cc4d0" stroke="#e8f4f6" stroke-width="0.8"/><path d="M6 3.6 L16.4 5.2 L15 15.4 L3 12.8Z" fill="#a4dce4"/><path d="M12 15.4 L15.6 17 L18.4 10 L14 11Z" fill="#d8e8ec"/><path d="M6 1.6 L17 3.4" stroke="#5c7c8c" stroke-width="1.1" stroke-dasharray="0.8 0.8"/></svg>
  <!-- Paint -->
  <svg style="left:222.5px;top:2px" width="20" height="20" viewBox="0 0 20 20"><path d="M9 5.4 C3 5.4 0.8 9.4 1.4 12.8 C2.2 17 8 18.6 11.6 16.4 C13.2 15.2 11 13.4 12.6 12 C14.6 10.6 16.6 12 16.6 9.4 C16.4 7 13 5.4 9 5.4Z" fill="#c8dcf0" stroke="#7a94b4" stroke-width="0.6"/><circle cx="5" cy="9.6" r="1.3" fill="#e03c2c"/><circle cx="8.4" cy="8" r="1.3" fill="#f2c41c"/><circle cx="4.6" cy="13" r="1.3" fill="#2c9c3c"/><circle cx="8" cy="14.6" r="1.3" fill="#3c5cd8"/><path d="M10.6 14.6 L16.6 3.6 L17.8 4.2 L12 15.4Z" fill="#e89a3c" stroke="#8a4c10" stroke-width="0.4"/><path d="M16.4 4 L17.4 1 L18.8 1.8 L17.8 4.6Z" fill="#f4e4c4"/></svg>
  <!-- SketchUp (active) -->
  <div class="a" style="left:251px;top:0.6px;width:32.5px;height:23px;background:#b4a2ab;border:0.6px solid #d2c6cc;box-sizing:border-box"></div>
  <svg style="left:257.5px;top:2.4px" width="20" height="20" viewBox="0 0 20 20"><path d="M2 9 L8 4 L13.4 7.6 L12 14.6 L5.4 16.6 Z" fill="#f6f2ea" stroke="#5a5a5a" stroke-width="0.6"/><path d="M8 4 L13.4 7.6 L9 10.4 L2 9Z" fill="#f0a46c"/><path d="M5 11 L7.4 11 L7.4 15.6 L5 16.2Z" fill="#4a4a4a"/><path d="M6.6 17.6 L8 14 L15.6 3 L17.8 4.6 L10 15.6 Z" fill="#d8282c" stroke="#6a1010" stroke-width="0.5"/><path d="M6.6 17.6 L8 14 L10 15.6Z" fill="#e8d4a4"/><path d="M15.6 3 L17.8 4.6 L18.6 3.4 L16.4 1.8Z" fill="#e8e8e8"/></svg>
  <!-- V -->
  <svg style="left:293.5px;top:3px" width="18" height="18" viewBox="0 0 18 18"><rect x="0" y="0" width="17.6" height="17.6" fill="#7a140c"/><path d="M0 0 L8.8 8 L17.6 0 L17.6 17.6 L0 17.6Z" fill="#d83414"/><path d="M0 6 L8.8 17.6 L0 17.6Z" fill="#a81c0c"/><path d="M5 0 L12.6 0 L8.8 5.6Z" fill="#f2a41c"/><path d="M0.6 0.6 L4.4 0.6 L8.8 12.6 L13.2 0.6 L17 0.6 L10.6 17 L7 17 Z" fill="#f4f4f4"/></svg>
  <!-- Adobe -->
  <div class="a ad" style="left:329px;border-color:#2ec6f2;background:#0a1c30;color:#32c8f4">Ps</div>
  <div class="a ad" style="left:364px;border-color:#a9c6d8;background:#0c1822;color:#e4eef4">Lr</div>
  <div class="a ad" style="left:399px;border-color:#cb8ef4;background:#1c0a32;color:#d8a8f8">Ae</div>
  <div class="a ad" style="left:434px;border-color:#f4821c;background:#2a1204;color:#f68c1e">Ai</div>
  <div class="a ad" style="left:469.4px;border-color:#e25cf2;background:#240a30;color:#e46cf4">Pr</div>
  <!-- Photo viewer (active) -->
  <div class="a" style="left:497px;top:0.6px;width:32.5px;height:23px;background:#a8959f;border:0.6px solid #c4b6bd;box-sizing:border-box"></div>
  <svg style="left:503.5px;top:4px" width="18" height="15" viewBox="0 0 18 15"><rect x="0.5" y="0.5" width="17" height="14" fill="#f4f4f4" stroke="#4a8cd8" stroke-width="1"/><rect x="2" y="2" width="14" height="11" fill="#8cc8e8"/><path d="M2 8 C6 5 10 9 16 6.4 L16 13 L2 13Z" fill="#3c8c6c"/><path d="M2 10.6 C7 8.6 11 11.6 16 9.6 L16 13 L2 13Z" fill="#2a5c8c"/><path d="M0 0 L3 0 L0 3Z M18 0 L15 0 L18 3Z M0 15 L3 15 L0 12Z M18 15 L15 15 L18 12Z" fill="#2c7ce0"/></svg>
  <div class="a" style="left:536.5px;top:3.5px;width:5px;height:17px;background:radial-gradient(circle at 0.5px 0.5px,#4c3846 0.45px,transparent 0.6px) 0 0/2px 2px"></div>
  <!-- tray -->
  <div class="a" style="left:546px;top:5.6px;width:9.6px;height:10px;background:#f4f4f4;border-radius:1.2px"></div>
  <div class="a" style="left:548px;top:7px;width:5.6px;height:7px;background:#111;border-radius:2.6px"></div>
  <div class="a" style="left:551.4px;top:8.4px;width:1px;height:4px;background:#eee"></div>
  <div class="t" style="left:558.6px;top:5.6px;font-size:9.6px;color:#f2f2f2">あ</div>
  <svg style="left:570px;top:5px" width="11" height="11" viewBox="0 0 11 11"><path d="M1 4 L10 4 L9 10.4 L2 10.4Z" fill="#f0a42c" stroke="#a05c0c" stroke-width="0.5"/><path d="M1 4 L5.4 6 L10 4 L5.4 2.4Z" fill="#f8e4b4"/><circle cx="8" cy="2.6" r="1.8" fill="#3c8ce8"/><path d="M2 2 L4.6 4.4" stroke="#e03c3c" stroke-width="1.4"/></svg>
  <svg style="left:582px;top:5px" width="11" height="11" viewBox="0 0 11 11"><path d="M1 1.6 L7 1.6 L7 7 L3.6 7 L2 9 L2 7 L1 7Z" fill="#e8eef8" stroke="#6a7ca8" stroke-width="0.5"/><circle cx="7" cy="5.6" r="2.6" fill="#9cc8f4" stroke="#2c5cb8" stroke-width="0.8"/><path d="M5 7.6 L2.6 10.4" stroke="#2c5cb8" stroke-width="1.3"/></svg>
  <svg style="left:593px;top:5.4px" width="12" height="10" viewBox="0 0 12 10"><path d="M1 4 L6 1 L11 3 L11 7.4 L5.4 9.6 L1 7.6Z" fill="#f2b83c" stroke="#a86c0c" stroke-width="0.5"/><path d="M1 4 L5.6 5.6 L11 3 L6 1Z" fill="#f8dc8c"/><path d="M4 3.4 L8.6 2" stroke="#fff" stroke-width="0.9"/></svg>
  <svg style="left:606px;top:5.2px" width="11" height="11" viewBox="0 0 11 11"><circle cx="5.4" cy="5.4" r="5" fill="#1c3cb4" stroke="#a8b8e8" stroke-width="0.6"/><text x="3.2" y="8.2" font-family="Liberation Sans, sans-serif" font-size="7.6" font-weight="bold" fill="#fff">?</text></svg>
  <svg style="left:618px;top:6px" width="7" height="11" viewBox="0 0 7 11"><circle cx="3" cy="2" r="1.5" fill="none" stroke="#f4f4f4" stroke-width="0.9"/><rect x="1.4" y="6.4" width="4" height="3" fill="#e4e4e4"/></svg>
</div>

<!-- SCENE PANEL -->
<div class="panel" style="left:638.4px;top:61.4px;width:162px;height:234.6px;"></div>
<div class="a" style="left:798.8px;top:296px;width:1.2px;height:114px;background:#e2e2e2"></div>
<div class="ptitle" style="left:708.6px;top:66.8px;letter-spacing:-1.5px">シーン</div>
<div class="xbtn" style="left:783.8px;top:65.6px">x</div>
<div class="a" style="left:642.5px;top:79.6px;width:153px;height:211.6px;background:#f1f1f1"></div>
<svg style="left:645px;top:82.5px" width="10" height="10" viewBox="0 0 10 10"><path d="M1.4 4.4 A3.6 3.6 0 0 1 8 3" fill="none" stroke="#111" stroke-width="1.3"/><path d="M8.6 0.8 L8.8 4.2 L5.6 3.4Z" fill="#111"/><path d="M8.6 5.6 A3.6 3.6 0 0 1 2 7" fill="none" stroke="#111" stroke-width="1.3"/><path d="M1.4 9.2 L1.2 5.8 L4.4 6.6Z" fill="#111"/></svg>
<svg style="left:659.0px;top:82.6px" width="10" height="10" viewBox="0 0 10 10"><circle cx="5" cy="5" r="4.5" fill="#fdfdfd" stroke="#111" stroke-width="1"/><path d="M2.6 5 L7.4 5 M5 2.6 L5 7.4" stroke="#111" stroke-width="1.15"/></svg>
<svg style="left:673.0px;top:82.6px" width="10" height="10" viewBox="0 0 10 10"><circle cx="5" cy="5" r="4.5" fill="#fdfdfd" stroke="#111" stroke-width="1"/><path d="M2.6 5 L7.4 5" stroke="#111" stroke-width="1.15"/></svg>
<svg style="left:724.5px;top:83px" width="6" height="9" viewBox="0 0 6 9"><path d="M5.2 0.9 L3 0.9 L3 6" fill="none" stroke="#111" stroke-width="1.6"/><path d="M0.2 4.8 L5.8 4.8 L3 8.8Z" fill="#111"/></svg>
<svg style="left:738px;top:83px" width="6" height="9" viewBox="0 0 6 9"><path d="M0.8 8.1 L3 8.1 L3 3" fill="none" stroke="#111" stroke-width="1.6"/><path d="M0.2 4.2 L5.8 4.2 L3 0.2Z" fill="#111"/></svg>
<svg style="left:750px;top:82.6px" width="9" height="10" viewBox="0 0 9 10"><g fill="none" stroke="#9a9a9a" stroke-width="0.6"><rect x="0.5" y="0.6" width="3" height="3"/><rect x="0.5" y="5.4" width="3" height="3"/></g><path d="M4.6 1.2 L8.4 1.2 M4.6 2.8 L7.4 2.8 M4.6 6 L8.4 6 M4.6 7.6 L7.4 7.6" stroke="#a4a4a4" stroke-width="0.7"/></svg>
<svg style="left:760.6px;top:86px" width="5" height="4" viewBox="0 0 5 4"><path d="M0.4 0.6 L4.6 0.6 L2.5 3.4Z" fill="#222"/></svg>
<svg style="left:769.6px;top:82px" width="7.4" height="9.8" viewBox="0 0 9 12"><rect x="0.4" y="0.4" width="8.2" height="11.2" fill="#fff" stroke="#555" stroke-width="0.6"/><rect x="0.6" y="0.6" width="7.8" height="5.6" fill="#111"/><rect x="2.4" y="2.6" width="4.2" height="1.6" fill="#fff"/><path d="M1.8 10.4 L4.5 7.6 L7.2 10.4Z" fill="#111"/></svg>
<svg style="left:782.9px;top:82.6px" width="9" height="10" viewBox="0 0 9 10"><rect x="0.8" y="2" width="4.8" height="6.6" fill="#e6f0fa" stroke="#7a9cc8" stroke-width="0.5"/><rect x="0.8" y="2" width="4.8" height="1.4" fill="#4a80c8"/><path d="M3.6 3.4 L5.6 3.4 L5.6 0.6 L9 5 L5.6 9.4 L5.6 6.6 L3.6 6.6Z" fill="#111"/></svg>
<div class="a" style="left:642.5px;top:98.6px;width:152.8px;height:67.4px;background:#fff;border:1px solid #dcdcdc;box-sizing:border-box;overflow:hidden">
 <div class="a" style="left:0px;top:0px;width:141px;height:41px;border:2px solid #318df0;box-sizing:border-box"></div>
 <svg style="left:1.6px;top:1.8px" width="37" height="37" viewBox="0 0 37 37"><rect width="37" height="37" fill="#9f9b9b"/><rect y="6" width="37" height="17" fill="#a9a5a5"/>
<path d="M3 23.5 L23.5 5.5 L35 7 L34 10 L12.5 31.5 L5 28Z" fill="#ecebe4" stroke="#cfcdc4" stroke-width="0.5"/>
<path d="M5 23.6 L15.5 14.2 L19 17 L8.6 27Z" fill="#4a3b2c"/>
<path d="M8.4 25.6 L19.6 14.4 L24.4 17.6 L13.2 29.4Z" fill="#b8742f"/>
<path d="M13.6 29 L24.6 18 L27 19.4 L15.6 30.6Z" fill="#dcc9a0"/>
<path d="M20.6 9.6 L24 6.6 L33.6 7.8 L31 11.6 L26 15.4 L22 12.6Z" fill="#c9ccd0"/>
<path d="M23.6 8 L26 8.4 L25.4 11 L23 10.6Z M27.4 8.6 L30 9 L29 12 L26.8 11.4Z" fill="#7d8a9c"/>
<path d="M3 23.5 L5 28 L12.5 31.5 L11.8 29 L6.2 26Z" fill="#bdbbb2"/>
<path d="M28.4 35.6 L29.2 33.4 L34 28.2 L35.6 29.6 L30.8 34.8 Z" fill="#d8242c"/><path d="M28.4 35.6 L29.2 33.4 L30.8 34.8Z" fill="#e8d4a4"/><path d="M27.6 36 L32 35.6" stroke="#555" stroke-width="0.5"/></svg>
 <div class="lt" style="left:41.6px;top:3.4px;font-weight:bold;color:#111;font-size:7px">俯瞰1</div>
 <div class="lt" style="left:41.6px;top:11.2px;font-style:italic;color:#6e6e6e;font-size:6.8px">写真: <span class="h">なし</span></div>
 <div class="lt" style="left:41.6px;top:19px;font-style:italic;color:#6e6e6e;font-size:6.8px">説明<span class="h">なし</span></div>
 <svg style="left:1.6px;top:45px" width="37.4" height="22" viewBox="0 0 37.4 22"><rect width="37.4" height="22" fill="#121212"/><rect width="37.4" height="7" fill="#9a9a9a"/><path d="M0 9 L20 12 L37.4 7.4 L37.4 7 L0 7Z" fill="#1e1e20"/><rect x="1.6" y="15.4" width="5" height="3.6" fill="#7c7c7c"/><rect x="11.4" y="14" width="1.8" height="8" fill="#d8a878"/><rect x="16" y="17.4" width="3" height="1.8" fill="#e8e8e8"/><rect x="18.6" y="16.4" width="1.2" height="1.2" fill="#d82c2c"/><rect x="20" y="16.6" width="2.4" height="2.6" fill="#26306a"/><path d="M23 20 L33 9.6 L33 20Z" fill="#6b4a38"/><path d="M33 8.4 L37.4 7.4 L37.4 20 L33 20Z" fill="#3c4644"/><path d="M31 11.6 L33 9.6 L33 20 L31 20Z" fill="#5a2c20"/></svg>
 <div class="lt" style="left:41.6px;top:46.2px;font-weight:bold;color:#111;font-size:7px">俯瞰2</div>
 <div class="lt" style="left:41.6px;top:54px;font-style:italic;color:#6e6e6e;font-size:6.8px">写真: <span class="h">なし</span></div>
 <div class="lt" style="left:41.6px;top:61.6px;font-style:italic;color:#6e6e6e;font-size:6.8px">説明<span class="h">なし</span></div>
 <div class="a" style="left:141.4px;top:0;width:11px;height:67px;background:#f0f0f0"></div>
 <div class="a" style="left:142px;top:7.4px;width:9.4px;height:9.6px;background:#cdcdcd"></div>
 <svg style="left:143.8px;top:1.6px" width="6" height="4" viewBox="0 0 6 4"><path d="M0.6 3.4 L3 1 L5.4 3.4" fill="none" stroke="#444" stroke-width="0.9"/></svg>
 <svg style="left:143.8px;top:60.4px" width="6" height="4" viewBox="0 0 6 4"><path d="M0.6 0.6 L3 3 L5.4 0.6" fill="none" stroke="#444" stroke-width="0.9"/></svg>
</div>
<div class="ck" style="left:684.4px;top:173.2px"><svg style="left:0.2px;top:0.2px" width="5" height="5" viewBox="0 0 5 5"><path d="M0.8 2.4 L2 3.8 L4.4 0.8" fill="none" stroke="#111" stroke-width="0.9"/></svg></div>
<div class="lt" style="left:694px;top:173.4px;font-size:6.9px"><span class="k">アニメーション</span><span class="h">に</span>含<span class="h">める</span><span class="e">(<u>I</u>)</span></div>
<div class="lt" style="left:664.6px;top:187.6px;font-size:6.9px;color:#555">名前:</div>
<div class="a" style="left:685px;top:184.2px;width:87.6px;height:10.6px;background:#fff;border:1px solid;border-color:#8e8e8e #d8d8d8 #d8d8d8 #8e8e8e;box-sizing:border-box"></div>
<div class="lt" style="left:687px;top:186px;font-size:6.9px">俯瞰1</div>
<div class="lt" style="left:664.6px;top:199.8px;font-size:6.9px;color:#555">説明:</div>
<div class="a" style="left:685px;top:196.8px;width:87.6px;height:10.2px;background:#fff;border:1px solid;border-color:#8e8e8e #d8d8d8 #d8d8d8 #8e8e8e;box-sizing:border-box"></div>
<div class="lt" style="left:646.4px;top:209.6px;font-size:6.9px;color:#555">保存<span class="h">する</span><span class="k">プロ</span></div>
<div class="lt" style="left:663.6px;top:217.2px;font-size:6.9px;color:#555"><span class="k">パティ</span>:</div>
<div class="ck" style="left:684.4px;top:214.2px"><svg style="left:0.2px;top:0.2px" width="5" height="5" viewBox="0 0 5 5"><path d="M0.8 2.4 L2 3.8 L4.4 0.8" fill="none" stroke="#111" stroke-width="0.9"/></svg></div>
<div class="lt" style="left:693.6px;top:214.4px;font-size:6.9px"><span class="k">カメラ</span><span class="h">の</span>位置</div>
<div class="ck" style="left:684.4px;top:224px"></div>
<div class="lt" style="left:693.6px;top:224.2px;font-size:6.9px">非表示<span class="k">ジオメトリ</span></div>
<!-- ENTITY INFO -->
<div class="panel" style="left:471.6px;top:151.5px;width:162.6px;height:83px;"></div>
<div class="a" style="left:477.6px;top:168.8px;width:152.8px;height:62px;background:#f1f1f1"></div>
<div class="ptitle" style="left:526.6px;top:156.6px;font-size:8.1px"><span class="k">エンティティ</span>情報</div>
<div class="xbtn" style="left:618px;top:155.4px">x</div>
<div class="lt" style="left:482px;top:174.9px;font-size:7.1px;color:#111">選択<span class="h">なし</span></div>
<div class="a" style="left:478px;top:183.6px;width:137.4px;height:0.9px;background:#c6c6c6"></div>
<div class="a" style="left:478px;top:184.5px;width:137.4px;height:0.6px;background:#fafafa"></div>
<svg style="left:619px;top:172.4px" width="7.4" height="9.8" viewBox="0 0 9 12"><rect x="0.4" y="0.4" width="8.2" height="11.2" fill="#fff" stroke="#555" stroke-width="0.6"/><rect x="0.6" y="0.6" width="7.8" height="5.6" fill="#111"/><rect x="2.4" y="2.6" width="4.2" height="1.6" fill="#fff"/><path d="M1.8 10.4 L4.5 7.6 L7.2 10.4Z" fill="#111"/></svg>
<!-- LAYER PANEL -->
<div class="panel" style="left:624.2px;top:225px;width:162.2px;height:230px;"></div>
<div class="ptitle" style="left:694.6px;top:230.2px;letter-spacing:-1.9px">レイヤ</div>
<div class="xbtn" style="left:770px;top:229.8px">x</div>
<div class="a" style="left:628.6px;top:243.4px;width:153.6px;height:207px;background:#f1f1f1"></div>
<svg style="left:632.0px;top:246.6px" width="10" height="10" viewBox="0 0 10 10"><circle cx="5" cy="5" r="4.5" fill="#fdfdfd" stroke="#111" stroke-width="1"/><path d="M2.6 5 L7.4 5 M5 2.6 L5 7.4" stroke="#111" stroke-width="1.15"/></svg>
<svg style="left:646.0px;top:246.6px" width="10" height="10" viewBox="0 0 10 10"><circle cx="5" cy="5" r="4.5" fill="#fdfdfd" stroke="#111" stroke-width="1"/><path d="M2.6 5 L7.4 5" stroke="#111" stroke-width="1.15"/></svg>
<svg style="left:770.9px;top:246.6px" width="9" height="10" viewBox="0 0 9 10"><rect x="0.8" y="2" width="4.8" height="6.6" fill="#e6f0fa" stroke="#7a9cc8" stroke-width="0.5"/><rect x="0.8" y="2" width="4.8" height="1.4" fill="#4a80c8"/><path d="M3.6 3.4 L5.6 3.4 L5.6 0.6 L9 5 L5.6 9.4 L5.6 6.6 L3.6 6.6Z" fill="#111"/></svg>
<div class="a" style="left:628.6px;top:259.6px;width:153.6px;height:9px;background:#f3f3f3;border-bottom:1px solid #8c8c8c;box-sizing:border-box"></div>
<div class="lt" style="left:632px;top:260.6px;font-size:6.8px;color:#444">名前</div>
<svg style="left:654px;top:262.4px" width="4" height="4" viewBox="0 0 4 4"><path d="M0.6 3.4 L3.2 0.6" stroke="#8a8a8a" stroke-width="0.6"/></svg>
<div class="lt" style="left:733px;top:260.6px;font-size:6.8px;color:#444">可視</div>
<div class="lt" style="left:762px;top:260.6px;font-size:6.8px;color:#444">色</div>
<div class="a" style="left:728.4px;top:259.8px;width:0.8px;height:8.4px;background:#8e8e8e"></div>
<div class="a" style="left:757.4px;top:259.8px;width:0.8px;height:8.4px;background:#8e8e8e"></div>
<div class="a" style="left:781.2px;top:259.8px;width:0.8px;height:8.4px;background:#8e8e8e"></div>
<div class="a" style="left:628.6px;top:269px;width:153.6px;height:175.4px;background:#fff"></div>
<div class="rd" style="left:630.4px;top:272.5px"></div>
<div class="lt" style="left:640.2px;top:272.6px;font-size:6.7px;color:#333">Layer0</div>
<div class="ck" style="border-color:#a2a2a2;border-radius:0.8px;left:740.4px;top:272.1px;width:7.5px;height:7.5px"></div>
<div class="a" style="left:640px;top:281.0px;width:98.8px;height:9px;background:#3399ff"></div>
<div class="a" style="left:748.8px;top:281.0px;width:33px;height:9px;background:#3399ff"></div>
<div class="rd" style="left:630.4px;top:282.5px"></div>
<div class="lt" style="left:640.2px;top:282.6px;font-size:6.7px;color:#fff">断面</div>
<div class="ck" style="border-color:#a2a2a2;border-radius:0.8px;left:740.4px;top:282.1px;width:7.5px;height:7.5px"></div>
<div class="sw" style="left:766px;top:281.4px;background:#6b4413"></div>
<div class="rd" style="left:630.4px;top:292.4px"></div>
<div class="lt" style="left:640.2px;top:292.5px;font-size:6.7px;color:#333">床</div>
<div class="ck" style="border-color:#a2a2a2;border-radius:0.8px;left:740.4px;top:292.0px;width:7.5px;height:7.5px"><svg style="left:0px;top:0px" width="5.6" height="5.6" viewBox="0 0 5.6 5.6"><path d="M0.6 2.6 L2.1 4.4 L5.1 0.7" fill="none" stroke="#111" stroke-width="1.15"/></svg></div>
<div class="sw" style="left:766px;top:291.3px;background:#15659f"></div>
<div class="rd" style="left:630.4px;top:302.4px"></div>
<div class="lt" style="left:640.2px;top:302.5px;font-size:6.7px;color:#333">小物</div>
<div class="ck" style="border-color:#a2a2a2;border-radius:0.8px;left:740.4px;top:302.0px;width:7.5px;height:7.5px"></div>
<div class="sw" style="left:766px;top:301.3px;background:#6b3a10"></div>
<div class="rd" style="left:630.4px;top:312.3px"><div class="a" style="left:1.6px;top:1.6px;width:2.2px;height:2.2px;border-radius:50%;background:#111"></div></div>
<div class="lt" style="left:640.2px;top:312.4px;font-size:6.7px;color:#333">天井</div>
<div class="ck" style="border-color:#a2a2a2;border-radius:0.8px;left:740.4px;top:311.9px;width:7.5px;height:7.5px"><svg style="left:0px;top:0px" width="5.6" height="5.6" viewBox="0 0 5.6 5.6"><path d="M0.6 2.6 L2.1 4.4 L5.1 0.7" fill="none" stroke="#111" stroke-width="1.15"/></svg></div>
<div class="sw" style="left:766px;top:311.2px;background:#149a8a"></div>
<div class="rd" style="left:630.4px;top:322.3px"></div>
<div class="lt" style="left:640.2px;top:322.4px;font-size:6.7px;color:#333">壁</div>
<div class="ck" style="border-color:#a2a2a2;border-radius:0.8px;left:740.4px;top:321.9px;width:7.5px;height:7.5px"><svg style="left:0px;top:0px" width="5.6" height="5.6" viewBox="0 0 5.6 5.6"><path d="M0.6 2.6 L2.1 4.4 L5.1 0.7" fill="none" stroke="#111" stroke-width="1.15"/></svg></div>
<div class="sw" style="left:766px;top:321.2px;background:#6b4010"></div>
<div class="rd" style="left:630.4px;top:332.3px"></div>
<div class="lt" style="left:640.2px;top:332.4px;font-size:6.7px;color:#333">下図</div>
<div class="ck" style="border-color:#a2a2a2;border-radius:0.8px;left:740.4px;top:331.9px;width:7.5px;height:7.5px"></div>
<div class="sw" style="left:766px;top:331.2px;background:#7d7ca8"></div>

<!-- CAMERA MENU -->
<div class="a menu" id="cammenu" style="left:103px;top:24.5px;width:163px;height:263.5px;">
<div class="a" style="left:15.8px;top:1px;width:0.7px;height:259.5px;background:#e4e4e4"></div><div class="a" style="left:16.5px;top:1px;width:0.7px;height:259.5px;background:#f9f9f9"></div>
<div class="mi" style="top:0.79px"><span class="l" style="left:19.5px">戻<span class="h">る</span><span class="e">(<u>R</u>)</span></span></div>
<div class="mi" style="top:13.67px"><span class="l" style="left:19.5px">進<span class="h">む</span><span class="e">(<u>X</u>)</span></span></div>
<div class="mi" style="top:26.56px"><div class="hl" style="left:1px;top:0;width:159.6px;height:12.6px"></div><span class="l" style="left:19.5px">標準<span class="k">ビュー</span><span class="e">(<u>S</u>)</span></span><span class="a" style="right:6.5px;top:4.4px;width:0;height:0;border-left:2.4px solid #1c1c1c;border-top:2.2px solid transparent;border-bottom:2.2px solid transparent"></span></div>
<div class="sep" style="left:19px;top:41.1px;width:140.6px"></div>
<div class="mi" style="top:43.54px"><div class="hl" style="left:1px;top:0;width:12.6px;height:12.8px;background:#cfe3f6"></div><span class="l" style="left:19.5px">平行投影<span class="e">(<u>A</u>)</span></span><svg class="a" style="left:4.6px;top:3.4px" width="7" height="6" viewBox="0 0 7 6"><path d="M0.8 2.8 L2.6 4.8 L6.2 0.8" fill="none" stroke="#111" stroke-width="1.4"/></svg></div>
<div class="mi" style="top:56.43px"><span class="l" style="left:19.5px">遠近法<span class="e">(<u>V</u>)</span></span></div>
<div class="mi" style="top:69.31px"><span class="l" style="left:19.5px">2 点透視法<span class="e">(<u>T</u>)</span></span></div>
<div class="sep" style="left:19px;top:83.9px;width:140.6px"></div>
<div class="mi" style="top:86.30px"><span class="l" style="left:19.5px">新規写真照合...</span></div>
<div class="mi g" style="top:99.19px"><span class="l" style="left:19.5px">照合写真<span class="h">を</span>編集</span><span class="a" style="right:6.5px;top:4.4px;width:0;height:0;border-left:2.4px solid #8e8e8e;border-top:2.2px solid transparent;border-bottom:2.2px solid transparent"></span></div>
<div class="sep" style="left:19px;top:113.8px;width:140.6px"></div>
<div class="mi" style="top:116.17px"><span class="l" style="left:19.5px"><span class="k">オービット</span><span class="e">(<u>O</u>)</span></span><span class="s" style="left:144.5px">O</span></div>
<div class="mi" style="top:129.06px"><span class="l" style="left:19.5px"><span class="k">パン</span>表示<span class="e">(<u>P</u>)</span></span><span class="s" style="left:144.5px">H</span></div>
<div class="mi" style="top:141.94px"><span class="l" style="left:19.5px"><span class="w">ズーム</span><span class="e">(<u>Z</u>)</span></span><span class="s" style="left:144.5px">Z</span></div>
<div class="mi g" style="top:154.82px"><span class="l" style="left:19.5px">視野<span class="e">(<u>F</u>)</span></span></div>
<div class="mi" style="top:167.71px"><span class="l" style="left:19.5px">選択範囲<span class="h">を</span><span class="w">ズーム</span><span class="e">(<u>W</u>)</span></span><span class="s" style="left:103.0px">Ctrl+Shift+W</span></div>
<div class="mi" style="top:180.59px"><span class="l" style="left:19.5px">全体表示<span class="e">(<u>E</u>)</span></span><span class="s" style="left:105.5px">Ctrl+Shift+E</span></div>
<div class="mi g" style="top:193.48px"><span class="l" style="left:19.5px">写真<span class="h">に</span><span class="w">ズーム</span><span class="e">(<u>H</u>)</span></span></div>
<div class="sep" style="left:19px;top:208.1px;width:140.6px"></div>
<div class="mi" style="top:210.46px"><span class="l" style="left:19.5px"><span class="k">カメラ</span><span class="h">を</span>配置<span class="e">(<u>M</u>)</span></span></div>
<div class="mi g" style="top:223.35px"><span class="l" style="left:19.5px"><span class="k">ウォーク</span><span class="e">(<u>C</u>)</span></span><span class="s" style="left:128.0px">Alt+W</span></div>
<div class="mi" style="top:236.23px"><span class="l" style="left:19.5px"><span class="k">ピボット</span><span class="e">(<u>L</u>)</span></span></div>
<div class="mi g" style="top:249.12px"><span class="l" style="left:19.5px"><span class="k">イメージ</span> <span class="k">イグルー</span><span class="e">(<u>I</u>)</span></span><span class="s" style="left:146.5px">I</span></div>
</div>
<!-- SUBMENU -->
<div class="a menu" id="submenu" style="left:263px;top:50.4px;width:102.6px;height:92.4px;">
<div class="a" style="left:15.9px;top:1px;width:0.7px;height:88.5px;background:#e4e4e4"></div><div class="a" style="left:16.6px;top:1px;width:0.7px;height:88.5px;background:#f9f9f9"></div>
<div class="mi" style="top:0.66px"><span class="l" style="left:19.5px">平面<span class="e">(<u>T</u>)</span></span></div>
<div class="mi" style="top:13.55px"><span class="l" style="left:19.5px">底面<span class="e">(<u>O</u>)</span></span></div>
<div class="mi" style="top:26.43px"><div class="hl" style="left:1px;top:-0.2px;width:99.6px;height:12.8px"></div><span class="l" style="left:19.5px">正面<span class="e">(<u>F</u>)</span></span><span class="s" style="left:71.4px">Alt+F</span></div>
<div class="mi" style="top:39.32px"><span class="l" style="left:19.5px">背面<span class="e">(<u>B</u>)</span></span><span class="s" style="left:71.4px">Alt+B</span></div>
<div class="mi" style="top:52.20px"><span class="l" style="left:19.5px">左側面<span class="e">(<u>L</u>)</span></span><span class="s" style="left:71.4px">Alt+L</span></div>
<div class="mi" style="top:65.09px"><span class="l" style="left:19.5px">右側面<span class="e">(<u>R</u>)</span></span><span class="s" style="left:71.4px">Alt+R</span></div>
<div class="mi" style="top:77.97px"><span class="l" style="left:19.5px">等角<span class="e">(<u>I</u>)</span></span></div>
</div>
</body>
</html>
